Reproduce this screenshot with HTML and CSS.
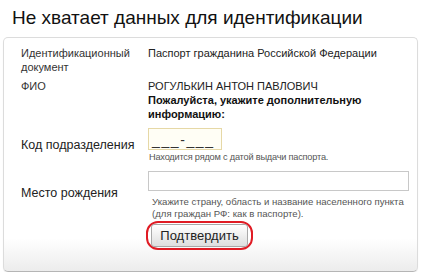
FILE: index.html
```html
<!DOCTYPE html>
<html lang="ru">
<head>
<meta charset="UTF-8">
<title>Не хватает данных для идентификации</title>
<link rel="stylesheet" href="styles.css">
</head>
<body>
  <h1 class="title">Не хватает данных для идентификации</h1>
  <div class="panel">
    <div class="row">
      <div class="label">Идентификационный документ</div>
      <div class="value">Паспорт гражданина Российской Федерации</div>
    </div>
    <div class="row row-fio">
      <div class="label">ФИО</div>
      <div class="value">
        РОГУЛЬКИН АНТОН ПАВЛОВИЧ<br>
        <b>Пожалуйста, укажите дополнительную информацию:</b>
      </div>
    </div>
    <div class="row row-code">
      <div class="label label-big">Код подразделения</div>
      <div class="value">
        <div class="input input-code">___-___</div>
        <div class="hint">Находится рядом с датой выдачи паспорта.</div>
      </div>
    </div>
    <div class="row row-place">
      <div class="label label-big">Место рождения</div>
      <div class="value">
        <div class="input input-place"></div>
        <div class="hint">Укажите страну, область и название населенного пункта<br>(для граждан РФ: как в паспорте).</div>
      </div>
    </div>
    <div class="row row-submit">
      <div class="label"></div>
      <div class="value">
        <span class="mark"><button class="button" type="button">Подтвердить</button></span>
      </div>
    </div>
  </div>
</body>
</html>
```

FILE: styles.css
```css
body {
  margin: 0;
  padding: 0;
  background: #fff;
  color: #333;
  font-family: "Liberation Sans", Arial, sans-serif;
}

.title {
  margin: 0;
  padding: 6px 0 0 12px;
  height: 31px;
  font-size: 19px;
  line-height: 24px;
  font-weight: normal;
  color: #111;
}

.panel {
  width: 386px;
  margin-left: 3px;
  padding: 8px 10px 21px 17px;
  border: 1px solid #dcdcdc;
  border-bottom-color: #b5b5b5;
  border-radius: 5px;
  background: linear-gradient(to bottom, #fff 86%, #ececec 100%);
  box-shadow: 0 1px 1px rgba(0, 0, 0, 0.08);
}

.row {
  display: flex;
  font-size: 11px;
  line-height: 14px;
}

.label {
  width: 127px;
  flex: none;
  color: #333;
}

.value {
  flex: 1;
  min-width: 0;
  color: #222;
}

.value b {
  color: #111;
}

.row-fio {
  margin-top: 5px;
}

.row-code {
  margin-top: 7px;
}

.label-big {
  font-size: 12.5px;
  padding-top: 10px;
  color: #222;
}

.row-place {
  margin-top: 8px;
}

.row-place .label-big {
  padding-top: 15px;
}

.input {
  box-sizing: border-box;
  border: 1px solid #c8c8c8;
  background: #fff;
}

.input-code {
  width: 74px;
  height: 22px;
  border-color: #e6d8a6;
  background: #fffef5;
  padding: 3px 0 0 3px;
  font-size: 14px;
  line-height: 16px;
  letter-spacing: 1.6px;
  color: #333;
}

.input-place {
  width: 261px;
  height: 20px;
}

.hint {
  font-size: 9.2px;
  line-height: 12px;
  color: #555;
  margin-top: 1px;
  padding-left: 1px;
  letter-spacing: -0.2px;
  white-space: nowrap;
}

.row-place .hint {
  font-size: 9.6px;
  margin-top: 5px;
  padding-left: 4px;
  letter-spacing: 0;
}

.row-submit {
  margin-top: 1px;
}

.mark {
  display: inline-block;
  margin-left: -2px;
  padding: 1px 3px;
  border: 2px solid #e01b24;
  border-radius: 12px;
}

.button {
  display: block;
  width: 97px;
  height: 23px;
  padding: 0;
  border: 1px solid #a8a8a8;
  border-radius: 3px;
  background: linear-gradient(to bottom, #fff, #dedede);
  font-family: "Liberation Sans", Arial, sans-serif;
  font-size: 13px;
  color: #222;
}
```
